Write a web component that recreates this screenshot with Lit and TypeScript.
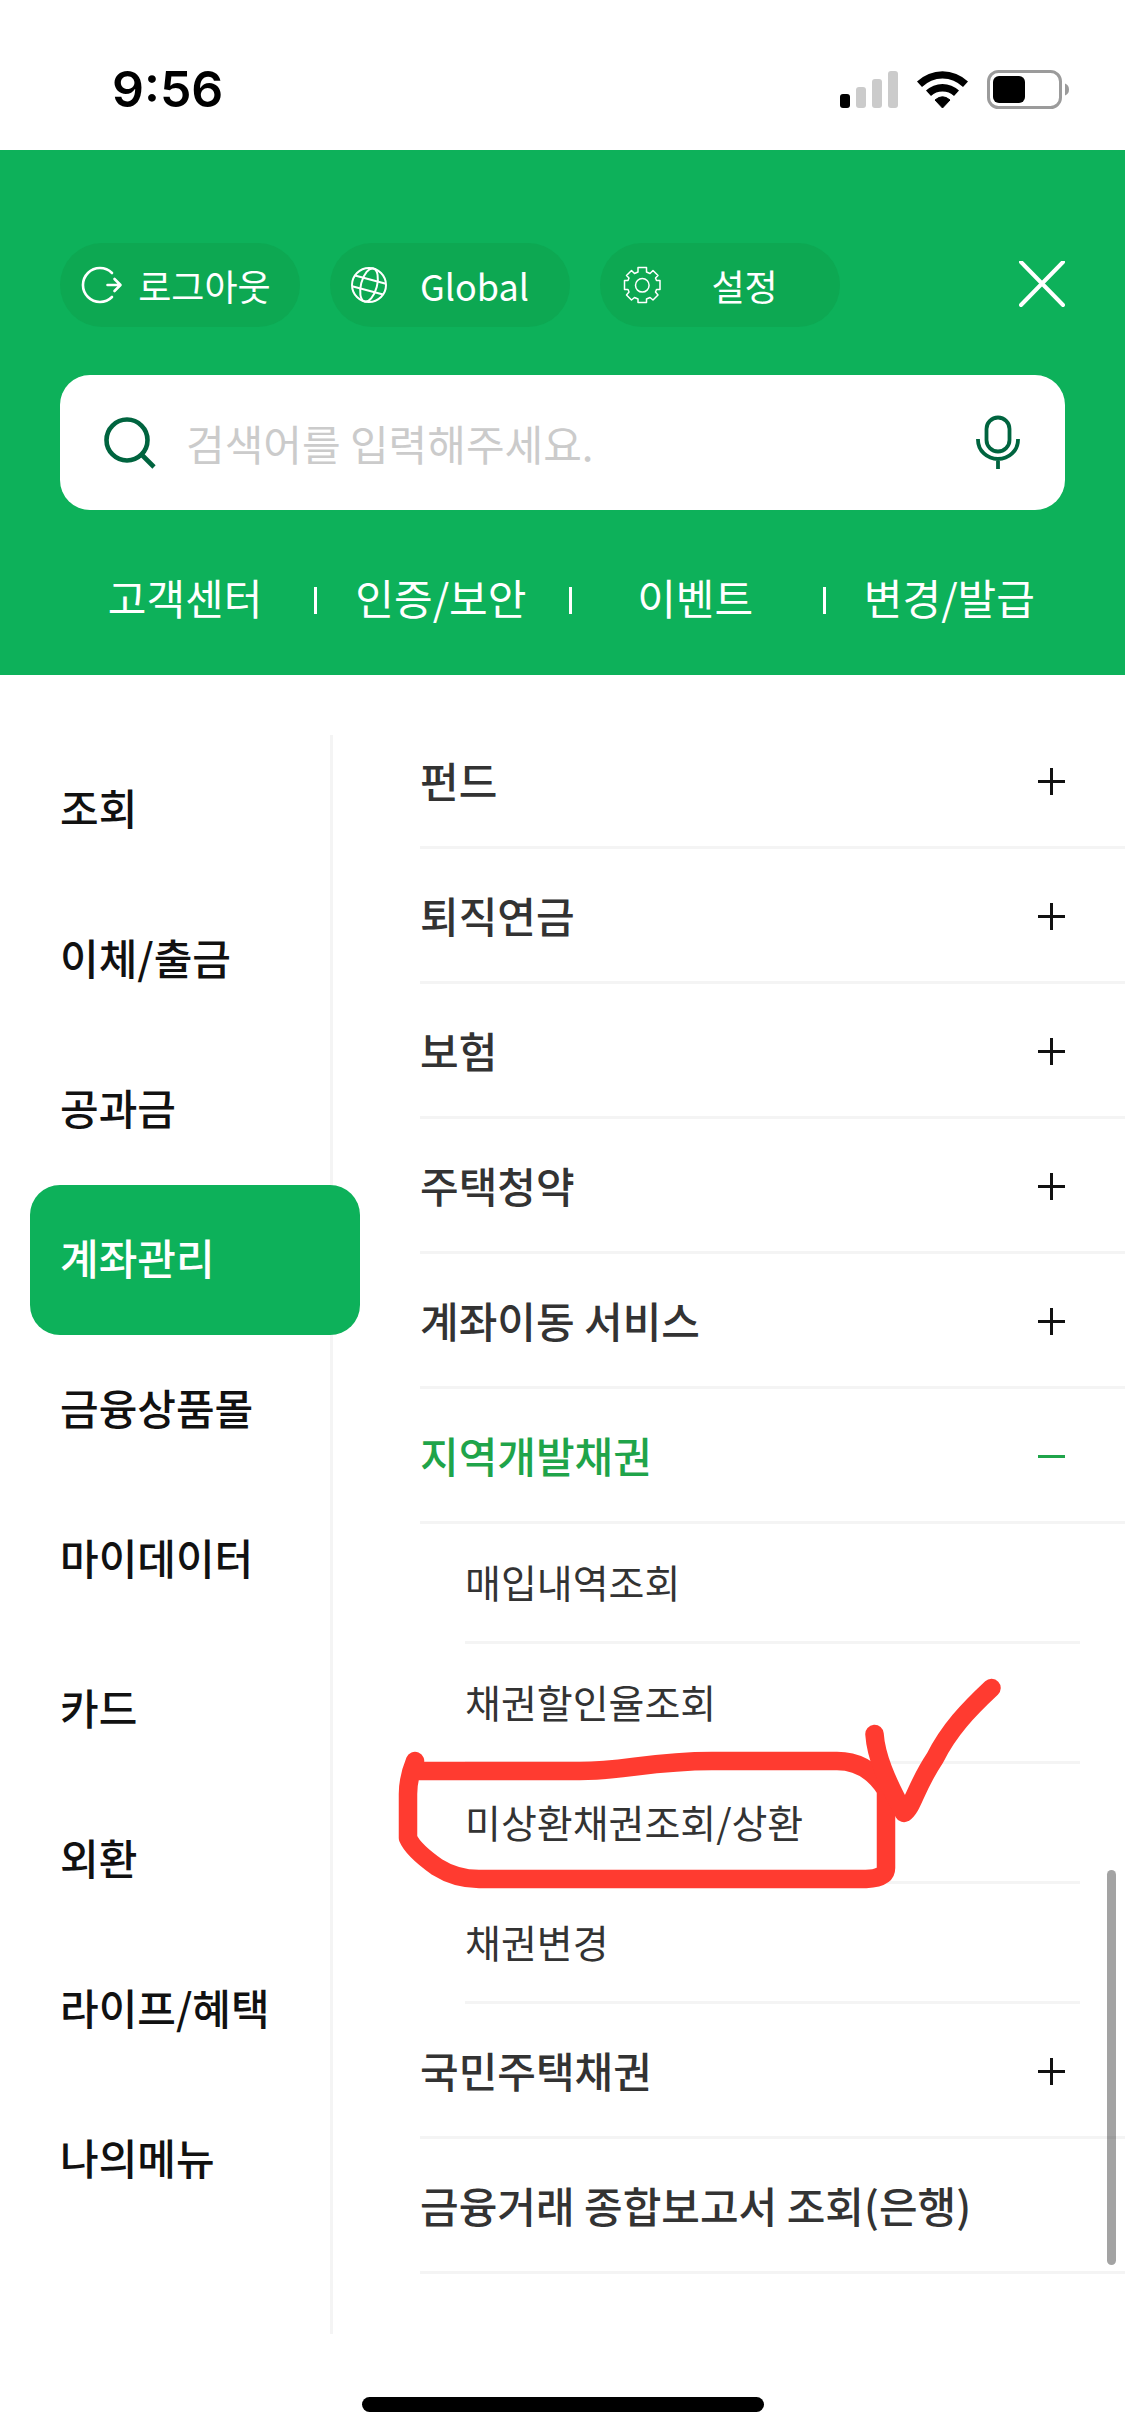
import { LitElement, html, css, svg, nothing } from "lit";
import { customElement, property, state } from "lit/decorators.js";
import { classMap } from "lit/directives/class-map.js";

interface MenuGroup {
  label: string;
  leaf?: boolean;
  items?: { label: string; marked?: boolean }[];
}

const CATEGORIES = ["조회", "이체/출금", "공과금", "계좌관리", "금융상품몰", "마이데이터", "카드", "외환", "라이프/혜택", "나의메뉴"];

const SHORTCUTS = ["고객센터", "인증/보안", "이벤트", "변경/발급"];

const GROUPS: MenuGroup[] = [
  { label: "펀드" },
  { label: "퇴직연금" },
  { label: "보험" },
  { label: "주택청약" },
  { label: "계좌이동 서비스" },
  {
    label: "지역개발채권",
    items: [
      { label: "매입내역조회" },
      { label: "채권할인율조회" },
      { label: "미상환채권조회/상환", marked: true },
      { label: "채권변경" },
    ],
  },
  { label: "국민주택채권" },
  { label: "금융거래 종합보고서 조회(은행)", leaf: true },
];

@customElement("status-bar")
export class StatusBar extends LitElement {
  static styles = css`
    :host {
      display: flex;
      align-items: center;
      justify-content: space-between;
      height: 150px;
      padding: 28px 56px 0 112px;
      box-sizing: border-box;
      background: #fff;
      color: #000;
    }
    .time {
      font: 600 50px/60px Inter, "Liberation Sans", sans-serif;
    }
    .indicators {
      display: block;
      width: 229px;
      height: 39px;
    }
  `;

  render() {
    return html`
      <span class="time">9:56</span>
      <svg class="indicators" viewBox="0 0 229 39" aria-hidden="true">
        <rect x="0" y="24" width="10" height="14" rx="3" fill="#000" />
        <rect x="16" y="17" width="10" height="21" rx="3" fill="#cbcbcb" />
        <rect x="32" y="9" width="10" height="29" rx="3" fill="#cbcbcb" />
        <rect x="48" y="1" width="10" height="37" rx="3" fill="#cbcbcb" />
        <path d="M77 11.500A37 37 0 0 1 128 11.500L123 17A29 29 0 0 0 82 17Z" fill="#000" />
        <path d="M86 20.500A24 24 0 0 1 119 20.500L114 26A17 17 0 0 0 91 26Z" fill="#000" />
        <path d="M95 30Q102.500 23.500 110 30L102.500 38Z" fill="#000" stroke="#000" stroke-linejoin="round" />
        <rect x="148.500" y="1.500" width="72" height="36" rx="10" fill="none" stroke="#9b9b9b" stroke-width="3" />
        <rect x="153" y="6" width="32" height="27" rx="6" fill="#000" />
        <path d="M225 13.500Q229 15 229 19.500Q229 24 225 25.500Z" fill="#9b9b9b" />
      </svg>
    `;
  }
}

@customElement("menu-header")
export class MenuHeader extends LitElement {
  static styles = css`
    :host {
      display: block;
      padding: 93px 60px 30px;
      background: #0db15a;
      color: #fff;
    }
    button {
      border: 0;
      margin: 0;
      padding: 0;
      background: none;
      color: inherit;
      font: inherit;
    }
    .tools {
      display: flex;
      align-items: center;
      gap: 30px;
    }
    .pill {
      display: flex;
      align-items: center;
      width: 240px;
      height: 84px;
      padding: 0 14px 0 21px;
      border-radius: 42px;
      background: #0da852;
      font-size: 36px;
      line-height: 54px;
    }
    .pill svg {
      flex: none;
      width: 42px;
      height: 38px;
    }
    .pill span {
      flex: 1;
      text-align: center;
      white-space: nowrap;
    }
    .close {
      margin-left: auto;
      display: block;
    }
    .close svg {
      display: block;
      width: 46px;
      height: 48px;
    }
    .search {
      display: flex;
      align-items: center;
      height: 135px;
      margin-top: 48px;
      padding: 0 42px;
      border-radius: 30px;
      background: #fff;
    }
    .search svg {
      display: block;
      flex: none;
      width: 54px;
      height: 56px;
    }
    .field {
      flex: 1;
      min-width: 0;
      border: 0;
      outline: 0;
      margin: 0 30px;
      padding: 0;
      background: none;
      color: #111;
      font: inherit;
      font-size: 42px;
      line-height: 60px;
      height: 60px;
    }
    .field::placeholder {
      color: #cbcbcb;
      opacity: 1;
    }
    .shortcuts {
      display: grid;
      grid-template-columns: repeat(4, 1fr);
      margin-top: 45px;
      margin-right: -12px;
    }
    .shortcut {
      display: flex;
      align-items: center;
      height: 90px;
      color: inherit;
      font-size: 42px;
      line-height: 60px;
      text-decoration: none;
      white-space: nowrap;
    }
    .shortcut span {
      flex: 1;
      padding: 0 4px 6px 0;
      text-align: center;
    }
    .shortcut:not(:first-child)::before {
      content: "";
      width: 3px;
      height: 27px;
      background: #fff;
    }
  `;

  render() {
    return html`
      <div class="tools">
        <button class="pill">
          <svg viewBox="0 0 42 38" fill="none" stroke="#fff" stroke-width="2.600" stroke-linecap="round" stroke-linejoin="round" aria-hidden="true">
            <path d="M31 7A17 17 0 1 0 31 31" />
            <path d="M26.500 19H39M33.500 13L39.500 19L33.500 25" />
          </svg>
          <span>로그아웃</span>
        </button>
        <button class="pill">
          <svg viewBox="0 0 42 38" fill="none" stroke="#fff" stroke-width="2" aria-hidden="true">
            <circle cx="18" cy="19" r="17" />
            <g transform="rotate(15 18 19)">
              <ellipse cx="18" cy="19" rx="8" ry="17" />
              <path d="M2 13.500H34M2 24.500H34" />
            </g>
          </svg>
          <span>Global</span>
        </button>
        <button class="pill">
          <svg viewBox="0 0 42 38" fill="none" stroke="#fff" stroke-width="1.500" stroke-linejoin="round" aria-hidden="true">
            <g transform="translate(2.500 0)">
              <path d="M14.500 1.500H23V6L26.500 7.500L29.500 4.500L34.500 9.500L32 12L33 14.500H36.500V23.500H33L32 26L34.500 29L29.500 34L26.500 31.500L23 33V36.500H14.500V33L11 31.500L8 34L3 29L5.500 26L4.500 23.500H1V14.500H4.500L5.500 12L3 9.500L8 4.500L11 7.500L14.500 6Z" />
              <circle cx="18.800" cy="19.300" r="6.800" />
            </g>
          </svg>
          <span>설정</span>
        </button>
        <button class="close" aria-label="닫기">
          <svg viewBox="0 0 46 48" stroke="#fff" stroke-width="4" stroke-linecap="round" aria-hidden="true">
            <path d="M2 1L44 44M44 1L2 44" />
          </svg>
        </button>
      </div>
      <div class="search">
        <svg viewBox="0 0 54 56" fill="none" stroke="#00643f" stroke-width="4.600" aria-hidden="true">
          <circle cx="25" cy="25" r="20.500" />
          <path d="M39.500 39.500L52 52" />
        </svg>
        <input class="field" type="search" aria-label="검색어" placeholder="검색어를 입력해주세요." />
        <button aria-label="음성 검색">
          <svg viewBox="0 0 54 56" fill="none" stroke="#00643f" stroke-width="3.800" aria-hidden="true">
            <rect x="17.500" y="2.500" width="23" height="34" rx="11.500" />
            <path d="M9 24V25A20 19 0 0 0 49 25V24M29 44V54" />
          </svg>
        </button>
      </div>
      <nav class="shortcuts">
        ${SHORTCUTS.map((s) => html`<a class="shortcut" href="#"><span>${s}</span></a>`)}
      </nav>
    `;
  }
}

@customElement("category-list")
export class CategoryList extends LitElement {
  @property({ type: Number }) selected = 0;

  static styles = css`
    :host {
      display: block;
      width: 330px;
      border-right: 3px solid #f4f4f4;
      box-sizing: content-box;
    }
    .category {
      display: block;
      width: 330px;
      height: 150px;
      margin: 0 0 0 30px;
      padding: 0 0 6px 30px;
      border: 0;
      border-radius: 30px;
      background: none;
      color: #111;
      font: inherit;
      font-size: 42px;
      font-weight: 500;
      line-height: 60px;
      text-align: left;
      white-space: nowrap;
    }
    .active {
      position: relative;
      background: #0db15a;
      color: #fff;
    }
  `;

  render() {
    return CATEGORIES.map(
      (label, i) => html`
        <button
          class=${classMap({ category: true, active: i === this.selected })}
          @click=${() => this.dispatchEvent(new CustomEvent("pick", { detail: i }))}
        >${label}</button>
      `,
    );
  }
}

@customElement("menu-groups")
export class MenuGroups extends LitElement {
  @state() private open = 5;

  static styles = css`
    :host {
      display: block;
    }
    ul {
      list-style: none;
      margin: 0;
      padding: 0;
    }
    .group {
      display: flex;
      align-items: center;
      justify-content: space-between;
      width: 100%;
      height: 135px;
      margin: 0;
      padding: 0 60px 0 0;
      border: 0;
      border-bottom: 3px solid #f4f4f4;
      box-sizing: border-box;
      background: none;
      color: #333;
      font: inherit;
      font-size: 42px;
      font-weight: 500;
      line-height: 60px;
      text-align: left;
      text-decoration: none;
      white-space: nowrap;
    }
    .open {
      color: #1fa44a;
    }
    .sign {
      display: block;
      flex: none;
      width: 27px;
      height: 27px;
      margin-top: 3px;
    }
    .items {
      padding: 0 45px;
    }
    .item {
      position: relative;
    }
    .link {
      display: flex;
      align-items: center;
      height: 120px;
      padding-bottom: 3px;
      border-bottom: 3px solid #f4f4f4;
      box-sizing: border-box;
      color: #333;
      font-size: 39px;
      line-height: 57px;
      text-decoration: none;
      white-space: nowrap;
    }
    .scribble {
      position: absolute;
      left: -70px;
      top: -94px;
      width: 615px;
      height: 224px;
      pointer-events: none;
    }
  `;

  private sign(open: boolean) {
    return html`
      <svg class="sign" viewBox="0 0 27 27" fill=${open ? "#1fa44a" : "#111"} aria-hidden="true">
        <rect x="0" y="12" width="27" height="3" />
        ${open ? nothing : svg`<rect x="12" y="0" width="3" height="27" />`}
      </svg>
    `;
  }

  private scribble() {
    return html`
      <svg class="scribble" viewBox="395 1670 615 224" fill="none" stroke="#ff3b30" stroke-width="18.500" stroke-linecap="round" stroke-linejoin="round" aria-hidden="true">
        <path d="M415 1761Q408 1778 408 1794V1838Q413 1850 437 1867Q456 1879 479 1879H866Q886 1878 886 1868V1790Q868 1761 837 1761H712C650 1761 625 1771 580 1771H417" />
        <path d="M874.500 1734C876 1756 886 1780 904 1813C913 1807 915 1788 935 1758C949 1730 968 1710 991.500 1688" />
      </svg>
    `;
  }

  render() {
    return html`
      <ul>
        ${GROUPS.map((g, i) => {
          const open = i === this.open && !!g.items;
          return html`
            <li>
              ${g.leaf
                ? html`<a class="group" href="#">${g.label}</a>`
                : html`
                    <button
                      class=${classMap({ group: true, open })}
                      aria-expanded=${open ? "true" : "false"}
                      @click=${() => (this.open = open ? -1 : i)}
                    >${g.label}${this.sign(open)}</button>
                  `}
              ${open
                ? html`
                    <ul class="items">
                      ${g.items!.map(
                        (it) => html`
                          <li class="item">
                            <a class="link" href="#">${it.label}</a>
                            ${it.marked ? this.scribble() : nothing}
                          </li>
                        `,
                      )}
                    </ul>
                  `
                : nothing}
            </li>
          `;
        })}
      </ul>
    `;
  }
}

@customElement("app-root")
export class AppRoot extends LitElement {
  @state() private category = 3;

  static styles = css`
    :host {
      display: flex;
      flex-direction: column;
      position: relative;
      min-height: 100vh;
      overflow: hidden;
      background: #fff;
      font-family: "Noto Sans CJK KR", sans-serif;
    }
    .body {
      flex: 1;
      display: flex;
      align-items: stretch;
      position: relative;
      padding-top: 39px;
    }
    .side {
      flex: none;
      margin-top: 21px;
    }
    .main {
      flex: 1;
      min-width: 0;
      margin-left: 87px;
    }
    .thumb {
      position: absolute;
      right: 9px;
      bottom: 69px;
      width: 9px;
      height: 395px;
      border-radius: 5px;
      background: rgba(0, 0, 0, 0.36);
    }
    .home {
      display: flex;
      justify-content: center;
      padding: 63px 0 24px;
    }
    .bar {
      width: 402px;
      height: 15px;
      border-radius: 8px;
      background: #000;
    }
  `;

  render() {
    return html`
      <status-bar></status-bar>
      <menu-header></menu-header>
      <div class="body">
        <category-list
          class="side"
          .selected=${this.category}
          @pick=${(e: CustomEvent<number>) => (this.category = e.detail)}
        ></category-list>
        <menu-groups class="main"></menu-groups>
        <div class="thumb"></div>
      </div>
      <div class="home"><div class="bar"></div></div>
    `;
  }
}
